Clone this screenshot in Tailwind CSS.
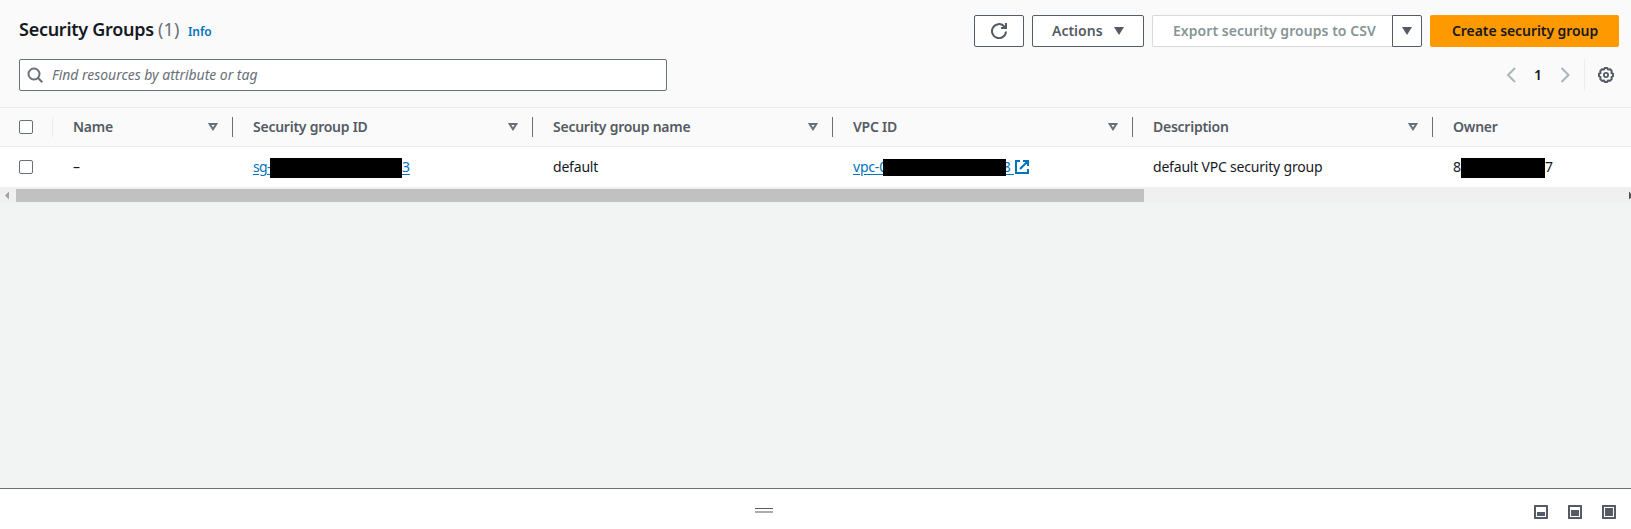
<!DOCTYPE html>
<html lang="en">
<head>
<meta charset="utf-8">
<title>Security Groups</title>
<script src="https://cdn.jsdelivr.net/npm/@tailwindcss/browser@4"></script>
</head>
<body class="w-[1631px] h-[529px] overflow-hidden flex flex-col bg-[#f2f3f3] font-['Noto_Sans',sans-serif] text-sm text-[#16191f]">
<header class="h-[108px] shrink-0 bg-[#fafafa] border-b border-[#eaeded] pl-[19px] pr-3 pt-[15px]">
  <div class="flex h-8 justify-between">
    <div class="flex items-baseline h-8 leading-[28px] whitespace-nowrap">
      <h1 class="w-[139px] text-[18px] font-semibold tracking-[-0.27px]">Security Groups</h1>
      <span class="w-[30px] text-[18px] text-[#687078] tracking-[0.1px]">(1)</span>
      <a class="text-xs font-semibold text-[#0073bb] tracking-[-0.1px]">Info</a>
    </div>
    <div class="flex font-semibold leading-[30px] whitespace-nowrap">
      <button class="w-[50px] h-8 mr-2 bg-white border border-[#545b64] rounded-[2px] flex items-center justify-center">
        <svg class="w-4 h-4" viewBox="0 0 16 16" fill="none" stroke="#545b64" stroke-width="2"><path d="M15 8.500a7 7 0 1 1-2-5.300L14.800 5M10 5h5V0"/></svg>
      </button>
      <button class="w-28 h-8 mr-2 pl-[19px] bg-white border border-[#545b64] rounded-[2px] flex items-center text-[#545b64]">
        <span class="w-[62px] text-left">Actions</span>
        <svg class="w-[10px] h-2" viewBox="0 0 10 8" fill="#545b64"><path d="M0 0h10L5 8z"/></svg>
      </button>
      <button class="w-60 h-8 pl-[20px] text-left bg-white border border-r-0 border-[#d5dbdb] rounded-l-[2px] text-[#879596] tracking-[0.05px]">Export security groups to CSV</button>
      <button class="w-[30px] h-8 mr-2 bg-white border border-[#545b64] rounded-r-[2px] flex items-center justify-center">
        <svg class="w-[10px] h-2" viewBox="0 0 10 8" fill="#545b64"><path d="M0 0h10L5 8z"/></svg>
      </button>
      <button class="w-[189px] h-8 pl-[22px] text-left bg-[#ff9900] rounded-[2px] tracking-[-0.07px]">Create security group</button>
    </div>
  </div>
  <div class="flex mt-3 h-8">
    <div class="w-[648px] h-8 border border-[#687078] rounded-[2px] bg-white flex items-center pl-[7px] text-[#687078]">
      <svg class="w-4 h-4 mr-[9px]" viewBox="0 0 16 16" fill="none" stroke="#687078" stroke-width="2"><circle cx="7" cy="7" r="5.500"/><path d="M10.800 10.800l4.500 4.500"/></svg>
      <span class="italic leading-[30px] tracking-[-0.03px] whitespace-nowrap">Find resources by attribute or tag</span>
    </div>
    <div class="ml-auto flex items-center">
      <svg class="w-[10px] h-4" viewBox="0 0 10 16" fill="none" stroke="#aab7b8" stroke-width="2"><path d="M9 1L2 8l7 7"/></svg>
      <span class="w-11 text-center font-semibold">1</span>
      <svg class="w-[10px] h-4" viewBox="0 0 10 16" fill="none" stroke="#aab7b8" stroke-width="2"><path d="M1.500 1l7 7-7 7"/></svg>
      <div class="w-px h-8 ml-[14px] mr-[13px] bg-[#eaeded]"></div>
      <svg class="w-4 h-4 mr-[5px]" viewBox="0 0 16 16" fill="none" stroke="#545b64"><path stroke-width="2" stroke-linejoin="round" d="M6.700 1h2.600l.6 1.500 2.200-.2 1.600 1.600-.2 2.200L15 6.700v2.600l-1.500.6.2 2.200-1.600 1.600-2.200-.2L9.300 15H6.700l-.6-1.500-2.200.2-1.600-1.600.2-2.200L1 9.300V6.700l1.500-.6-.2-2.200 1.600-1.600 2.200.2z"/><circle cx="8" cy="8" r="2.100" stroke-width="1.800"/></svg>
    </div>
  </div>
</header>
<div class="h-[39px] shrink-0 bg-[#fafafa] border-b border-[#eaeded] flex items-center font-semibold tracking-[-0.25px] text-[#545b64] whitespace-nowrap">
  <div class="w-[53px] h-5 pl-[19px] flex items-center border-r border-[#eaeded]"><span class="size-[14px] bg-white border border-[#687078] rounded-[2px]"></span></div>
  <div class="w-[180px] h-5 pl-5 pr-[14px] flex items-center justify-between border-r border-[#687078]"><span>Name</span><svg class="w-[10px] h-2" viewBox="0 0 10 8" fill="none" stroke="#687078" stroke-width="2"><path d="M1.700 1h6.600L5 6.200z"/></svg></div>
  <div class="w-[300px] h-5 pl-5 pr-[14px] flex items-center justify-between border-r border-[#687078]"><span>Security group ID</span><svg class="w-[10px] h-2" viewBox="0 0 10 8" fill="none" stroke="#687078" stroke-width="2"><path d="M1.700 1h6.600L5 6.200z"/></svg></div>
  <div class="w-[300px] h-5 pl-5 pr-[14px] flex items-center justify-between border-r border-[#687078]"><span>Security group name</span><svg class="w-[10px] h-2" viewBox="0 0 10 8" fill="none" stroke="#687078" stroke-width="2"><path d="M1.700 1h6.600L5 6.200z"/></svg></div>
  <div class="w-[300px] h-5 pl-5 pr-[14px] flex items-center justify-between border-r border-[#687078]"><span>VPC ID</span><svg class="w-[10px] h-2" viewBox="0 0 10 8" fill="none" stroke="#687078" stroke-width="2"><path d="M1.700 1h6.600L5 6.200z"/></svg></div>
  <div class="w-[300px] h-5 pl-5 pr-[14px] flex items-center justify-between border-r border-[#687078]"><span>Description</span><svg class="w-[10px] h-2" viewBox="0 0 10 8" fill="none" stroke="#687078" stroke-width="2"><path d="M1.700 1h6.600L5 6.200z"/></svg></div>
  <div class="pl-5"><span>Owner</span></div>
</div>
<div class="h-10 shrink-0 bg-white flex items-center tracking-[-0.2px] whitespace-nowrap">
  <div class="w-[53px] pl-[19px]"><span class="block size-[14px] bg-white border border-[#687078] rounded-[2px]"></span></div>
  <div class="w-[180px] pl-5">–</div>
  <div class="w-[300px] pl-5 flex items-center text-[#0073bb] underline underline-offset-2"><span class="w-[17px] tracking-[-0.6px]">sg-</span><span class="relative w-[132px] h-5 mt-[2px] bg-black"></span><span>3</span></div>
  <div class="w-[300px] pl-5">default</div>
  <div class="w-[300px] pl-5 flex items-center text-[#0073bb] underline underline-offset-2"><span class="w-[30px]">vpc-0</span><span class="relative z-10 w-[123px] h-[17px] mt-px bg-black"></span><span class="w-2 flex justify-end whitespace-pre">8 </span><svg class="w-[14px] h-[14px] ml-px" viewBox="0 0 14 14" fill="none" stroke="#0073bb" stroke-width="2"><path d="M5 1H1v12h12V9M8 1h5v5M13 1L5 9"/></svg></div>
  <div class="w-[300px] pl-5">default VPC security group</div>
  <div class="pl-5 flex items-center"><span class="w-2">8</span><span class="w-[84px] h-5 mt-px bg-black"></span><span class="tracking-[-1px]">7</span></div>
</div>
<div class="h-4 shrink-0 bg-[#f0f0f0] flex items-center">
  <svg class="w-4 h-4" viewBox="0 0 16 16" fill="#a3a3a3"><path d="M9 4.500v8l-4-4z"/></svg>
  <div class="w-[1128px] h-[13px] mt-px bg-[#c1c1c1]"></div>
  <svg class="w-[2px] h-4 ml-auto" viewBox="0 0 2 16" fill="#505050"><path d="M0 4.500L2 6.500v4l-2 2z"/></svg>
</div>
<main class="flex-1"></main>
<footer class="h-[41px] shrink-0 bg-white border-t border-[#687078] flex items-start">
  <div class="ml-[755px] mt-[19px] w-[18px]"><div class="h-px bg-[#545b64]"></div><div class="h-[2px] mt-[2px] bg-[#aaadb2]"></div></div>
  <div class="ml-auto mr-[15px] mt-4 flex gap-5">
    <svg class="size-[14px]" viewBox="0 0 14 14" fill="#545b64"><path fill-rule="evenodd" d="M.5 0h13l.5.5v13l-.5.5H.5l-.5-.5V.5zM2 2v10h10V2z"/><path d="M3 7h8v4H3z"/></svg>
    <svg class="size-[14px]" viewBox="0 0 14 14" fill="#545b64"><path fill-rule="evenodd" d="M.5 0h13l.5.5v13l-.5.5H.5l-.5-.5V.5zM2 2v10h10V2z"/><path d="M3 5h8v6H3z"/></svg>
    <svg class="size-[14px]" viewBox="0 0 14 14" fill="#545b64"><path fill-rule="evenodd" d="M.5 0h13l.5.5v13l-.5.5H.5l-.5-.5V.5zM2 2v10h10V2z"/><path d="M3 3h8v8H3z"/></svg>
  </div>
</footer>
</body>
</html>
